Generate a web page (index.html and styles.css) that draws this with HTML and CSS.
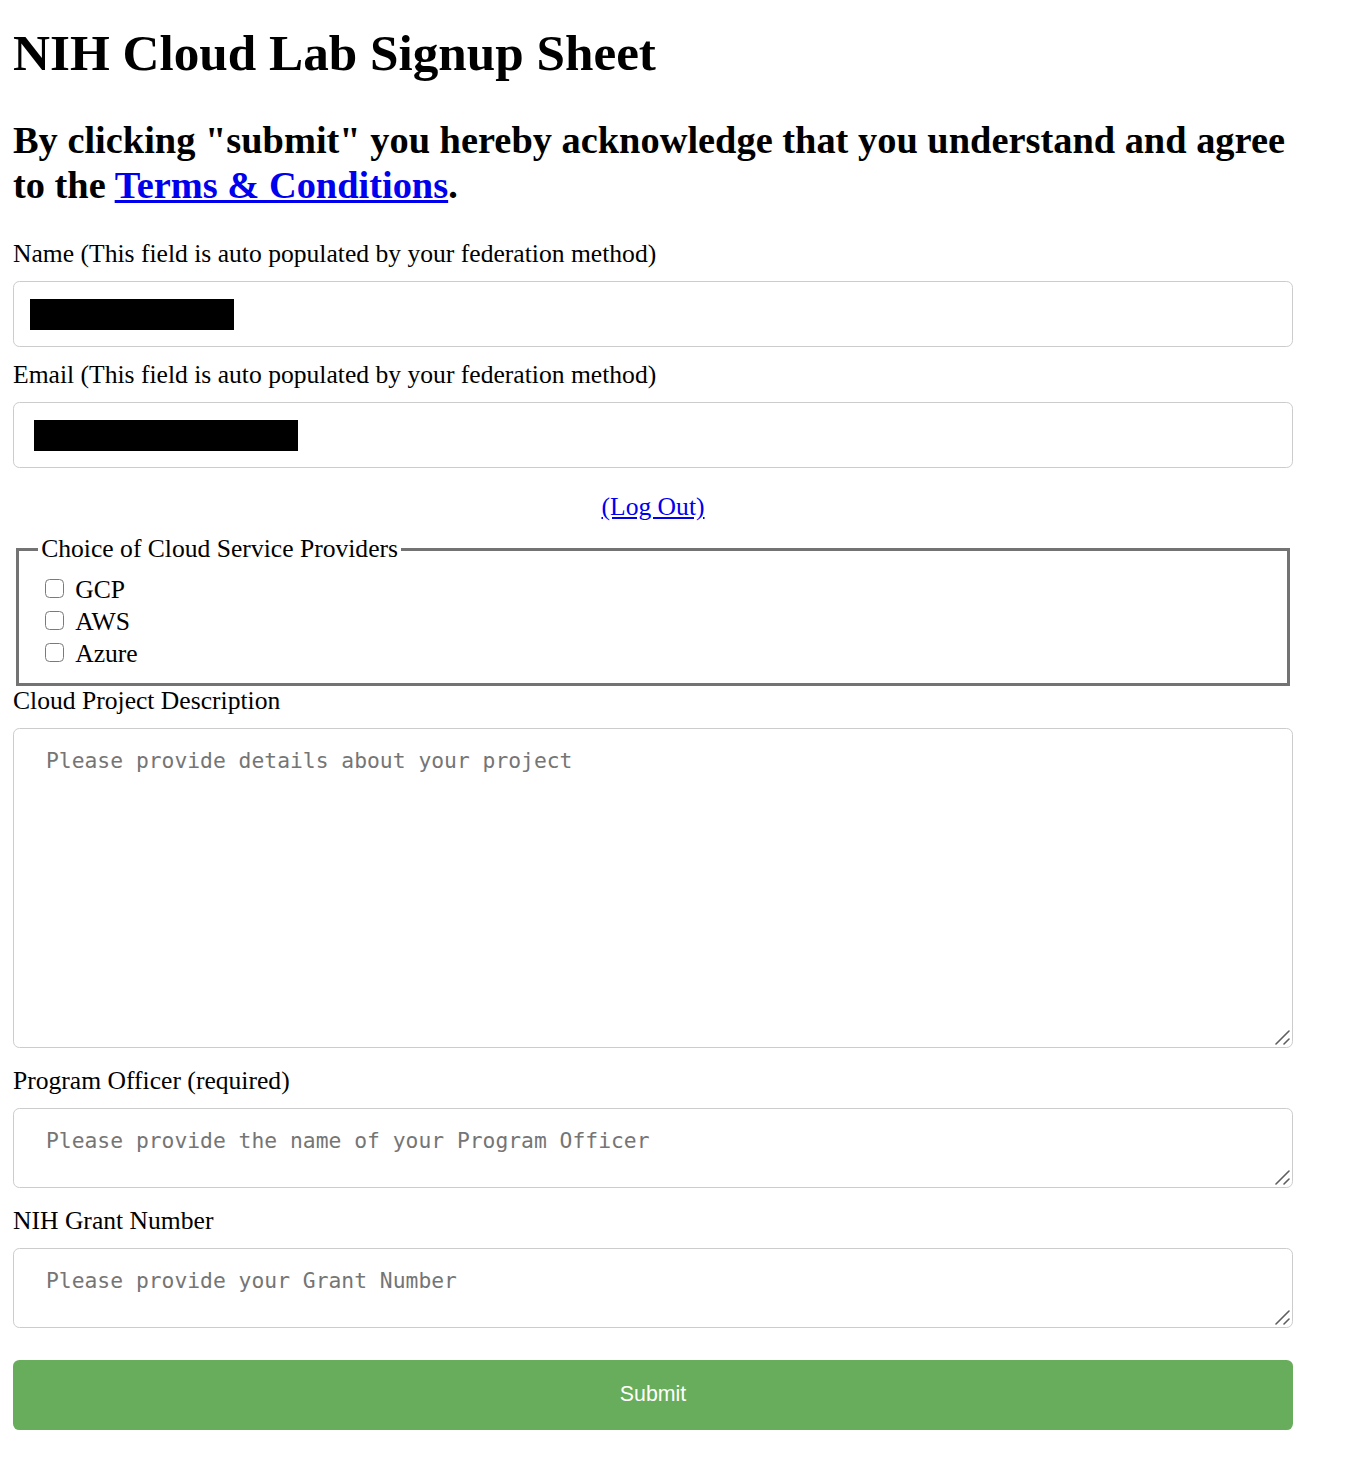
FILE: index.html
```html
<!DOCTYPE html>
<html lang="en">
<head>
<meta charset="utf-8">
<title>NIH Cloud Lab Signup Sheet</title>
<link rel="stylesheet" href="styles.css">
</head>
<body>
<div class="page">
  <h1 class="title">NIH Cloud Lab Signup Sheet</h1>
  <h2 class="notice">By clicking "submit" you hereby acknowledge that you understand and agree to the <a href="#">Terms &amp; Conditions</a>.</h2>
  <form class="form">
    <label class="field-label">Name (This field is auto populated by your federation method)</label>
    <div class="fake-input"><span class="redact redact-name"></span></div>
    <label class="field-label">Email (This field is auto populated by your federation method)</label>
    <div class="fake-input"><span class="redact redact-email"></span></div>
    <div class="logout"><a href="#">(Log Out)</a></div>
    <fieldset class="providers">
      <legend class="providers-legend">Choice of Cloud Service Providers</legend>
      <div class="option"><input class="check" type="checkbox" id="gcp"><label for="gcp">GCP</label></div>
      <div class="option"><input class="check" type="checkbox" id="aws"><label for="aws">AWS</label></div>
      <div class="option"><input class="check" type="checkbox" id="azure"><label for="azure">Azure</label></div>
    </fieldset>
    <label class="field-label" for="desc">Cloud Project Description</label>
    <div class="area-wrap">
      <textarea class="area area-lg" id="desc" placeholder="Please provide details about your project"></textarea>
      <svg class="grip" width="15" height="15" viewBox="0 0 15 15" aria-hidden="true"><line x1="1" y1="14" x2="14" y2="1"/><line x1="9" y1="14" x2="14" y2="9"/></svg>
    </div>
    <label class="field-label" for="po">Program Officer (required)</label>
    <div class="area-wrap">
      <textarea class="area area-sm" id="po" placeholder="Please provide the name of your Program Officer"></textarea>
      <svg class="grip" width="15" height="15" viewBox="0 0 15 15" aria-hidden="true"><line x1="1" y1="14" x2="14" y2="1"/><line x1="9" y1="14" x2="14" y2="9"/></svg>
    </div>
    <label class="field-label" for="grant">NIH Grant Number</label>
    <div class="area-wrap">
      <textarea class="area area-sm" id="grant" placeholder="Please provide your Grant Number"></textarea>
      <svg class="grip" width="15" height="15" viewBox="0 0 15 15" aria-hidden="true"><line x1="1" y1="14" x2="14" y2="1"/><line x1="9" y1="14" x2="14" y2="9"/></svg>
    </div>
    <button class="submit" type="button">Submit</button>
  </form>
</div>
</body>
</html>
```

FILE: styles.css
```css
html, body {
  margin: 0;
  background: #ffffff;
}

body {
  font-family: "Liberation Serif", "Times New Roman", serif;
  font-size: 25.6px;
  color: #000;
}

.page {
  width: 1280px;
  padding: 23px 0 0 13px;
}

.title {
  font-size: 51.2px;
  line-height: 60px;
  font-weight: bold;
  margin: 0;
}

.notice {
  font-size: 38.4px;
  line-height: 45px;
  font-weight: bold;
  margin: 35px 0 0;
}

.notice a {
  color: #0000ee;
  text-decoration: underline;
}

.form {
  margin-top: 31px;
  display: flex;
  flex-direction: column;
}

.field-label {
  display: block;
  line-height: 29.4px;
}

.fake-input {
  box-sizing: border-box;
  height: 66px;
  margin: 12.8px 0;
  border: 1px solid #cccccc;
  border-radius: 6.4px;
  display: flex;
  align-items: center;
  background: #fff;
}

.redact {
  display: block;
  background: #000;
}

.redact-name {
  width: 204px;
  height: 31px;
  margin-left: 16px;
}

.redact-email {
  width: 264px;
  height: 31px;
  margin-left: 20px;
}

.logout {
  margin-top: 11.3px;
  text-align: center;
  line-height: 29.4px;
}

.logout a {
  color: #0000ee;
  text-decoration: underline;
}

.providers {
  margin: 12.6px 3.2px 0;
  padding: 9.6px 19px 12.7px;
  border: 3px solid #737373;
  min-width: 0;
}

.providers-legend {
  padding: 0 3px;
  line-height: 29.4px;
}

.option {
  display: flex;
  align-items: center;
  height: 32.2px;
  line-height: 29.4px;
}

.check {
  appearance: none;
  -webkit-appearance: none;
  box-sizing: border-box;
  width: 19px;
  height: 19px;
  margin: 0 11px 0 7px;
  border: 1.5px solid #7a7a7a;
  border-radius: 4.5px;
  background: #fff;
  position: relative;
  top: -1px;
}

.area-wrap {
  position: relative;
  margin: 12.8px 0 18px;
}

.area {
  display: block;
  box-sizing: border-box;
  width: 100%;
  margin: 0;
  padding: 19.2px 32px;
  border: 1px solid #cccccc;
  border-radius: 6.4px;
  font-family: "DejaVu Sans Mono", "Liberation Mono", monospace;
  font-size: 21.33px;
  color: #000;
  background: #fff;
  resize: none;
}

.area::placeholder {
  color: #757575;
}

.area-lg {
  height: 320px;
}

.area-sm {
  height: 80px;
}

.grip {
  position: absolute;
  right: 3px;
  bottom: 3px;
  stroke: #5f5f5f;
  stroke-width: 1.6;
  stroke-linecap: round;
  pointer-events: none;
}

.submit {
  display: block;
  width: 100%;
  height: 70px;
  margin: 13.4px 0 0;
  border: none;
  border-radius: 6.4px;
  background: #68ad5b;
  color: #fff;
  font-family: "Liberation Sans", Arial, sans-serif;
  font-size: 21.33px;
  cursor: pointer;
}
```
